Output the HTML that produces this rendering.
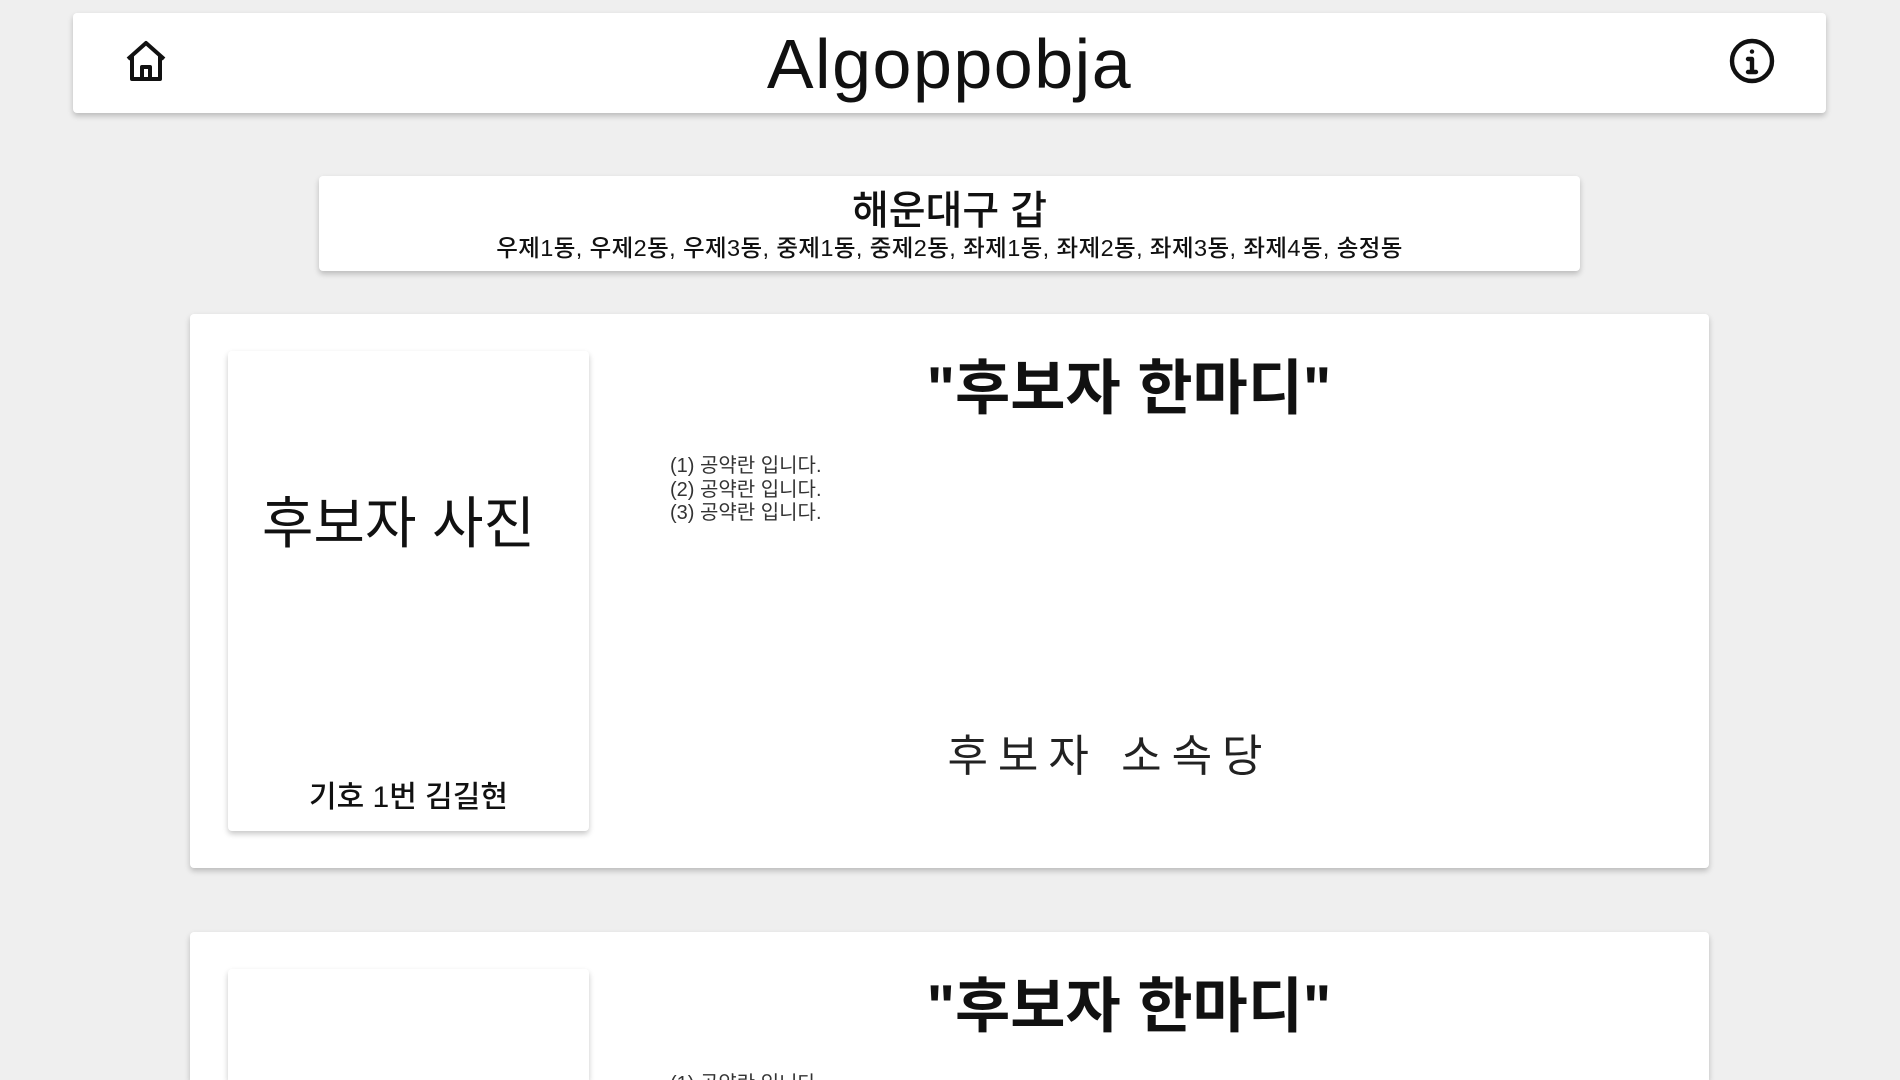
<!DOCTYPE html>
<html style="width:1900px;height:1080px;overflow:hidden"><head><meta charset="utf-8"><style>
*{margin:0;padding:0;box-sizing:border-box}
body{width:1900px;height:1080px;overflow:hidden;background:#efefef;font-family:"Liberation Sans","Noto Sans CJK KR",sans-serif;color:#111;position:relative}
.box{position:absolute;background:#fff;border-radius:4px;box-shadow:0 3px 6px rgba(0,0,0,.22)}
.c{position:absolute;left:0;right:0;text-align:center;white-space:nowrap}
</style></head><body>
<div class="box" style="left:73px;top:13px;width:1753px;height:100px">
  <svg style="position:absolute;left:49px;top:24px" width="48" height="48" viewBox="0 0 24 24" fill="none" stroke="#111" stroke-width="2" stroke-linejoin="round"><path d="M3 11 L12 3 L21 11 M5 9.5 V21 H19 V9.5 M10 21 V15 H14 V21"/></svg>
  <svg style="position:absolute;left:1655px;top:24px" width="48" height="48" viewBox="0 0 24 24" fill="none" stroke="#111" stroke-width="2.2"><circle cx="12" cy="12" r="10"/><path d="M12 11 V17.5 M10 17.5 H14 M10 11 H12" stroke-linecap="round"/><circle cx="12" cy="7.3" r="1.1" fill="#111" stroke="none"/></svg>
  <div class="c" style="top:16px;font-size:70px;line-height:70px;letter-spacing:1.5px;color:#111">Algoppobja</div>
</div>
<div class="box" style="left:319px;top:176px;width:1261px;height:95px">
  <div class="c" style="top:12px;font-size:40px;line-height:46px;font-weight:500">해운대구 갑</div>
  <div class="c" style="top:58px;font-size:23.5px;line-height:28px;font-weight:500;letter-spacing:0.4px">우제1동, 우제2동, 우제3동, 중제1동, 중제2동, 좌제1동, 좌제2동, 좌제3동, 좌제4동, 송정동</div>
</div>
<div class="box" style="left:190px;top:314px;width:1519px;height:554px">
  <div class="box" style="left:38px;top:37px;width:361px;height:480px">
    <div class="c" style="top:140px;font-size:56px;line-height:66px;padding-right:20px">후보자 사진</div>
    <div class="c" style="top:429px;font-size:30px;line-height:36px;font-weight:500">기호 1번 김길현</div>
  </div>
  <div style="position:absolute;left:439px;width:1000px;top:41px;text-align:center;font-size:60px;line-height:68px;font-weight:bold">"후보자 한마디"</div>
  <div style="position:absolute;left:480px;top:141px;font-size:20px;line-height:23.5px;color:#333">(1) 공약란 입니다.<br>(2) 공약란 입니다.<br>(3) 공약란 입니다.</div>
  <div style="position:absolute;left:420px;width:1000px;top:418px;text-align:center;font-size:44px;line-height:50px;letter-spacing:10px;color:#222">후보자 소속당</div>
</div>
<div class="box" style="left:190px;top:932px;width:1519px;height:148px;border-radius:4px 4px 0 0">
  <div class="box" style="left:38px;top:37px;width:361px;height:111px;border-radius:4px 4px 0 0"></div>
  <div style="position:absolute;left:439px;width:1000px;top:41px;text-align:center;font-size:60px;line-height:68px;font-weight:bold">"후보자 한마디"</div>
  <div style="position:absolute;left:480px;top:141px;height:7px;overflow:hidden;font-size:20px;line-height:23.5px;color:#333">(1) 공약란 입니다.</div>
</div>
</body></html>
